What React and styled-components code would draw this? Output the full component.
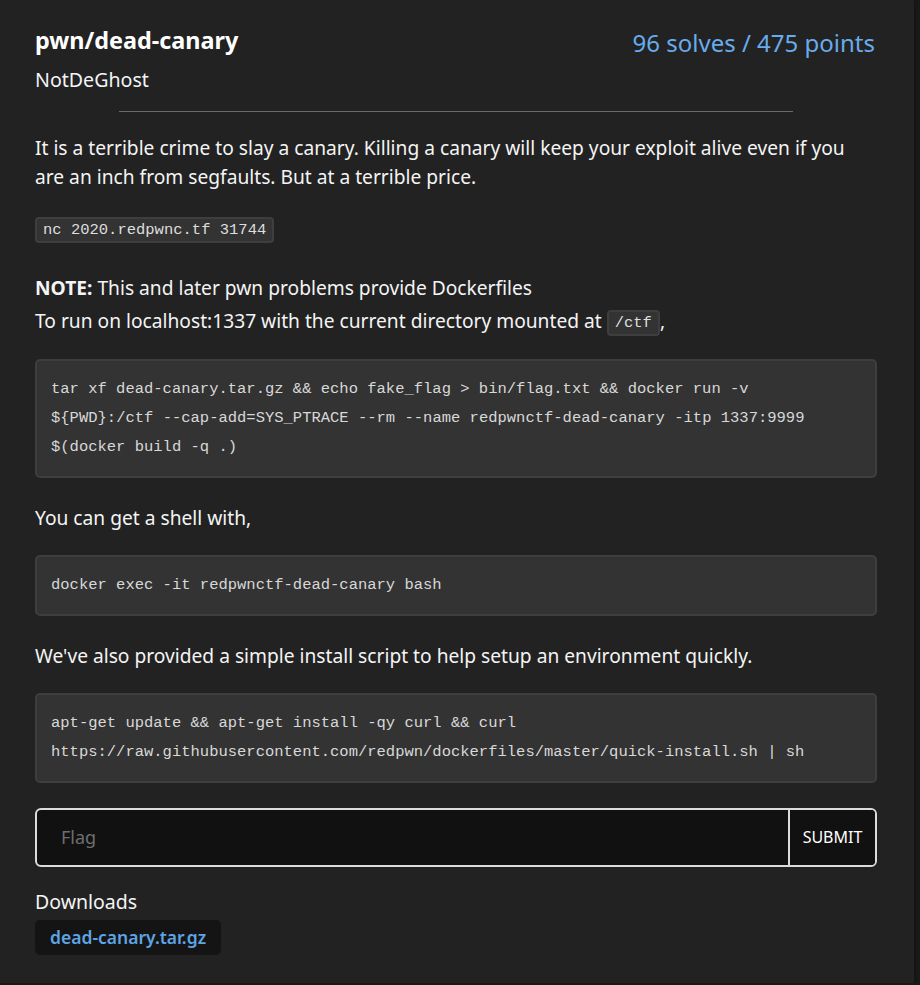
import React from "react";
import styled, { createGlobalStyle } from "styled-components";

const Global = createGlobalStyle`
  html, body { margin: 0; padding: 0; background: #1a1a1a; }
  body { font-family: "Noto Sans", "Open Sans", sans-serif; color: #f4f4f4; }
  * { box-sizing: border-box; }
`;

const Card = styled.div`
  width: 914px;
  min-height: 983px;
  background: #222222;
  padding: 22px 37px 20px 35px;
  box-shadow: 0 0 6px rgba(0,0,0,0.5);
`;

const Header = styled.div`
  display: flex;
  justify-content: space-between;
  align-items: flex-start;
`;

const Title = styled.h1`
  margin: 0;
  font-size: 23.4px;
  font-weight: 700;
  line-height: 36px;
  color: #ffffff;
`;

const Score = styled.div`
  font-size: 24px;
  line-height: 36px;
  color: #68acec;
  padding-top: 3px;
  margin-right: 2px;
`;

const Author = styled.div`
  font-size: 19.6px;
  line-height: 28px;
  margin-top: 5px;
`;

const Rule = styled.hr`
  width: 80%;
  margin: 17px auto 21px;
  border: 0;
  border-top: 1px solid #6a6a6a;
`;

const P = styled.p`
  margin: 0 0 ${p => p.$mb ?? 23}px;
  font-size: 19.2px;
  line-height: 29px;
`;

const Line = styled.span`
  display: block;
  margin-top: ${p => p.$mt || 0}px;
`;

const Inline = styled.code`
  display: inline-block;
  font-family: "Liberation Mono", monospace;
  font-size: 15.5px;
  line-height: 20px;
  background: #333;
  border: 2px solid #3e3e3e;
  border-radius: 4px;
  padding: 1px 6px;
  color: #dedede;
  vertical-align: middle;
`;

const Pre = styled.pre`
  margin: 0 0 ${p => p.$mb ?? 25}px;
  background: #333333;
  border: 2px solid #3e3e3e;
  border-radius: 5px;
  padding: 14px 22px 14px 14px;
  font-family: "Liberation Mono", monospace;
  font-size: 15.5px;
  line-height: 29px;
  color: #d8d8d8;
  white-space: pre-wrap;
`;

const Form = styled.form`
  display: flex;
  height: 59px;
  border: 2px solid #dcdcdc;
  border-radius: 6px;
  background: #111111;
  overflow: hidden;
`;

const Input = styled.input`
  flex: 1;
  border: 0;
  background: transparent;
  color: #eee;
  font-family: "Noto Sans", sans-serif;
  font-size: 18px;
  padding: 0 24px;
  outline: none;
  &::placeholder { color: #6e6e6e; }
`;

const Submit = styled.button`
  width: 87px;
  border: 0;
  border-left: 2px solid #dcdcdc;
  background: #111111;
  color: #ffffff;
  font-family: "Noto Sans", sans-serif;
  font-size: 16px;
  padding: 0;
`;

const Downloads = styled.div`
  margin-top: 21px;
  font-size: 19.5px;
  line-height: 28px;
`;

const Chip = styled.a`
  display: inline-block;
  margin-top: 4px;
  background: #141414;
  border-radius: 5px;
  padding: 3px 15px;
  font-size: 17.5px;
  line-height: 29px;
  font-weight: 600;
  color: #5ea4e4;
  text-decoration: none;
`;

export default function App() {
  return (
    <>
      <Global />
      <Card>
        <Header>
          <Title>pwn/dead-canary</Title>
          <Score>96 solves / 475 points</Score>
        </Header>
        <Author>NotDeGhost</Author>
        <Rule />
        <P $mb={22}>
          It is a terrible crime to slay a canary. Killing a canary will keep your exploit alive even if you are an inch from segfaults. But at a terrible price.
        </P>
        <P $mb={30}>
          <Inline>nc 2020.redpwnc.tf 31744</Inline>
        </P>
        <P $mb={23}>
          <Line><strong>NOTE:</strong> This and later pwn problems provide Dockerfiles</Line>
          <Line $mt={4}>
            To run on localhost:1337 with the current directory mounted at <Inline>/ctf</Inline>,
          </Line>
        </P>
        <Pre>tar xf dead-canary.tar.gz &amp;&amp; echo fake_flag &gt; bin/flag.txt &amp;&amp; docker run -v ${"{PWD}"}:/ctf --cap-add=SYS_PTRACE --rm --name redpwnctf-dead-canary -itp 1337:9999 $(docker build -q .)</Pre>
        <P>You can get a shell with,</P>
        <Pre>docker exec -it redpwnctf-dead-canary bash</Pre>
        <P>We've also provided a simple install script to help setup an environment quickly.</P>
        <Pre>apt-get update &amp;&amp; apt-get install -qy curl &amp;&amp; curl https://raw.githubusercontent.com/redpwn/dockerfiles/master/quick-install.sh | sh</Pre>
        <Form onSubmit={e => e.preventDefault()}>
          <Input placeholder="Flag" />
          <Submit type="submit">SUBMIT</Submit>
        </Form>
        <Downloads>Downloads</Downloads>
        <Chip href="#">dead-canary.tar.gz</Chip>
      </Card>
    </>
  );
}
